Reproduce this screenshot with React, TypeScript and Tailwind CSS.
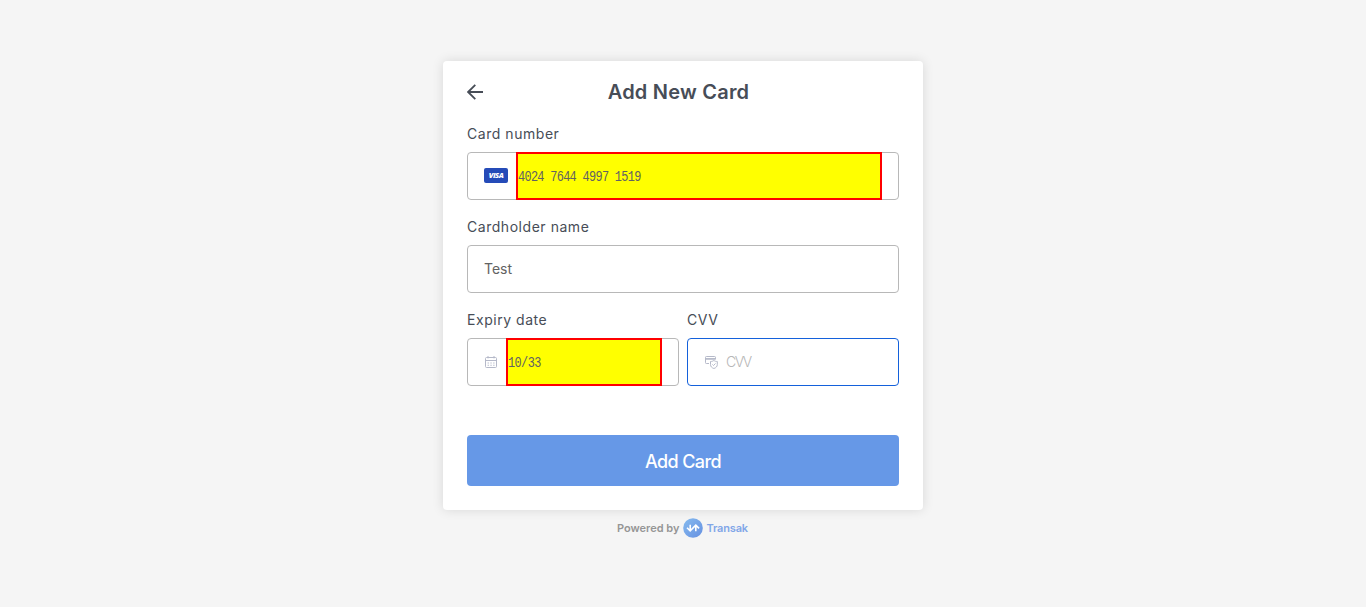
import type { ReactNode } from 'react';

function ArrowLeft() {
  return (
    <svg className="block h-4 w-4" viewBox="0 0 16 16" fill="none" stroke="#474d57" strokeWidth="1.8">
      <path d="M8.3 .8 1.1 8l7.2 7.2M1.1 8H16" />
    </svg>
  );
}

function VisaBadge() {
  return (
    <span className="mb-[2px] flex h-[15px] w-6 shrink-0 items-center justify-center rounded-[2px] bg-[#254bb8] pt-px font-['Open_Sans',sans-serif] text-[7.5px] leading-none font-extrabold tracking-[-0.5px] text-white italic">
      VISA
    </span>
  );
}

function CalendarIcon() {
  return (
    <svg className="block h-3 w-3 shrink-0" viewBox="0 0 12 12" fill="none" stroke="#b5b9c9">
      <rect x=".5" y="1.5" width="11" height="10" rx="1" />
      <path d="M.5 4.5h11M3 0v2.4M9 0v2.4" />
      <path d="M2.6 7h7M2.6 9.2h7" strokeWidth="1.1" strokeDasharray="1.3 1.5" />
    </svg>
  );
}

function CardShieldIcon() {
  return (
    <svg className="block h-[13px] w-[13px] shrink-0" viewBox="0 0 13 13" fill="none" stroke="#b5b9c9">
      <path d="M4 7.5H1.3a.8.8 0 0 1-.8-.8V1.3C.5.8.8.5 1.3.5h8.4c.5 0 .8.3.8.8v2" />
      <path d="M.5 2.9h10" strokeWidth="1.7" />
      <path d="M8.9 4.4c1.1.9 2.1 1.1 3.4 1.1v3.1c0 1.9-1.3 3.2-3.4 3.9-2.1-.7-3.4-2-3.4-3.9V5.5c1.3 0 2.3-.2 3.4-1.1Z" />
      <path d="m7.4 8.4 1.1 1.1 2-2" />
    </svg>
  );
}

function TransakMark() {
  return (
    <svg className="block h-5 w-5 shrink-0" viewBox="0 0 20 20" fill="none">
      <defs>
        <linearGradient id="mark" x1="0" y1="0" x2="1" y2="1">
          <stop stopColor="#86bbef" />
          <stop offset="1" stopColor="#6690e1" />
        </linearGradient>
      </defs>
      <circle cx="10" cy="10" r="9.8" fill="url(#mark)" />
      <path d="M7.2 6.8v5.8M4 9.7l3.2 3.1 3.5-3.5M12.8 13.2V7.4M9.6 10.4l3.2-3.2 3.3 3.2" stroke="#fff" strokeWidth="1.6" />
    </svg>
  );
}

function Field({ label, width, children }: { label: string; width: string; children: ReactNode }) {
  return (
    <div className={width}>
      <div className="h-7 text-[14px] leading-5 tracking-[0.54px] text-[#474d57]">{label}</div>
      {children}
    </div>
  );
}

export default function App() {
  return (
    <div className="flex min-h-screen flex-col items-center bg-[#f5f5f5] pt-[61px] font-[Inter,sans-serif]">
      <main className="flex h-[449px] w-[480px] flex-col rounded-[4px] bg-white px-6 pt-[15px] shadow-[0_0_12px_rgba(0,0,0,0.12)]">
        <header className="flex h-8 items-center">
          <ArrowLeft />
          <h1 className="flex-1 pr-[25px] text-center text-[20px] leading-8 font-semibold tracking-[0.22px] text-[#474d57]">
            Add New Card
          </h1>
        </header>

        <div className="mt-4 flex flex-col gap-[17px]">
          <Field label="Card number" width="w-full">
            <div className="flex h-12 items-center rounded-[4px] border border-[#b8b8b8] pr-4 pl-4">
              <VisaBadge />
              <div className="-my-px ml-2 flex h-12 flex-1 items-center border-2 border-[#ff0000] bg-[#ffff00] pt-[2px] font-['Liberation_Mono',monospace] text-[14px] tracking-[-0.81px] text-[#626262]">
                <span className="origin-left scale-x-[0.85] whitespace-nowrap">4024 7644 4997 1519</span>
              </div>
            </div>
          </Field>
          <Field label="Cardholder name" width="w-full">
            <div className="flex h-12 items-center rounded-[4px] border border-[#b8b8b8] px-4 pb-[2px] text-[14px] text-[#626262]">
              Test
            </div>
          </Field>
          <div className="flex gap-2">
            <Field label="Expiry date" width="w-[212px]">
              <div className="flex h-12 items-center rounded-[4px] border border-[#b8b8b8] pr-4 pl-[17px]">
                <CalendarIcon />
                <div className="-my-px ml-[9px] flex h-12 flex-1 items-center border-2 border-[#ff0000] bg-[#ffff00] pt-[2px] font-['Liberation_Mono',monospace] text-[14px] tracking-[-0.7px] text-[#626262]">
                  <span className="origin-left scale-x-[0.85] whitespace-nowrap">10/33</span>
                </div>
              </div>
            </Field>
            <Field label="CVV" width="w-[212px]">
              <div className="flex h-12 items-center rounded-[4px] border border-[#1461db] pr-4 pl-[17px] text-[14px] font-light tracking-[-1.5px] text-[#b7b7b7]">
                <CardShieldIcon />
                <span className="ml-2 pb-px">CVV</span>
              </div>
            </Field>
          </div>
        </div>

        <button className="mt-[49px] h-[51px] w-full rounded-[4px] bg-[#6698e7] pt-px text-[18px] font-medium tracking-[-0.62px] text-white">
          Add Card
        </button>
      </main>
      <footer className="mt-2 flex h-5 items-center pr-px text-[11px] font-semibold">
        <span className="tracking-[-0.02px] text-[#969696]">Powered by</span>
        <span className="ml-1"><TransakMark /></span>
        <span className="ml-[3px] tracking-[-0.15px] text-[#81a6e8]">Transak</span>
      </footer>
    </div>
  );
}
